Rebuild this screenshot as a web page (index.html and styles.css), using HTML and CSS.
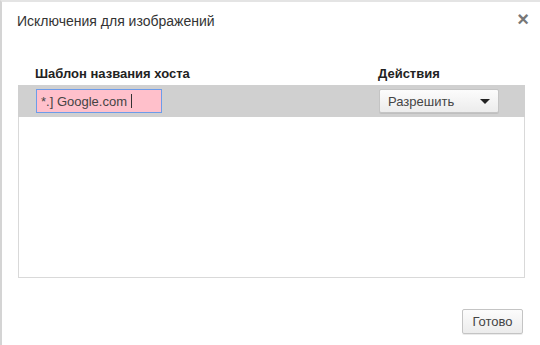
FILE: index.html
```html
<!DOCTYPE html>
<html lang="ru">
<head>
    <meta charset="UTF-8">
    <title>Исключения для изображений</title>
    <link rel="stylesheet" href="styles.css">
</head>
<body>
    <div class="dialog">
        <div class="dialog-head">
            <h1>Исключения для изображений</h1>
            <span class="close">&times;</span>
        </div>
        <div class="list">
            <div class="list-head">
                <span class="col-host">Шаблон названия хоста</span>
                <span class="col-action">Действия</span>
            </div>
            <div class="list-box">
                <div class="row selected">
                    <div class="col-host">
                        <span class="host-input">*.] Google.com <span class="caret"></span></span>
                    </div>
                    <div class="col-action">
                        <span class="select">Разрешить <span class="arrow"></span></span>
                    </div>
                </div>
            </div>
        </div>
        <div class="footer">
            <button type="button">Готово</button>
        </div>
    </div>
</body>
</html>
```

FILE: styles.css
```css
html, body {
    margin: 0;
    height: 100%;
}
body {
    font-family: "Liberation Sans", Arial, sans-serif;
    font-size: 13px;
    color: #333;
    background: #fff;
}
.dialog {
    box-sizing: border-box;
    height: 345px;
    border-top: 2px solid #e4e4e4;
    border-left: 2px solid #d4d4d4;
    display: flex;
    flex-direction: column;
}
.dialog-head {
    box-sizing: border-box;
    display: flex;
    justify-content: space-between;
    padding: 10px 11px 0 15px;
    height: 46px;
}
.dialog-head h1 {
    margin: 0;
    font-size: 14px;
    line-height: 18px;
    font-weight: normal;
    color: #333;
}
.close {
    font-size: 20px;
    font-weight: bold;
    line-height: 14px;
    color: #777;
}
.list {
    padding: 0 15px 0 16px;
}
.list-head {
    box-sizing: border-box;
    display: flex;
    font-weight: bold;
    height: 37px;
    padding-top: 17px;
    line-height: 18px;
    color: #222;
}
.list-box {
    height: 192px;
    border: 1px solid #d9d9d9;
    border-top: none;
}
.row {
    display: flex;
    align-items: center;
    height: 32px;
}
.row.selected {
    background: #d0d0d0;
    margin: 0 -1px;
}
.col-host {
    width: 343px;
    padding-left: 17px;
}
.col-action {
    flex: 1;
}
.row .col-host {
    padding-left: 18px;
    width: 342px;
}
.row .col-action {
    padding-left: 1px;
}
.host-input {
    box-sizing: border-box;
    display: inline-flex;
    align-items: center;
    width: 126px;
    height: 24px;
    padding: 0 4px;
    border: 1px solid #6c9cea;
    background: #ffc0cb;
    color: #444;
    white-space: pre;
}
.caret {
    display: inline-block;
    width: 1px;
    height: 14px;
    background: #333;
}
.select {
    box-sizing: border-box;
    display: flex;
    align-items: center;
    justify-content: space-between;
    width: 120px;
    height: 24px;
    padding: 0 8px;
    border: 1px solid #c4c4c4;
    border-radius: 2px;
    background: linear-gradient(#fcfcfc, #ececec);
    box-shadow: 0 1px 0 rgba(0, 0, 0, 0.08);
    color: #444;
}
.arrow {
    width: 0;
    height: 0;
    border-left: 5px solid transparent;
    border-right: 5px solid transparent;
    border-top: 5px solid #222;
}
.footer {
    display: flex;
    justify-content: flex-end;
    padding: 31px 17px 0 0;
}
button {
    font-family: inherit;
    font-size: 13px;
    color: #444;
    height: 25px;
    width: 61px;
    padding: 0;
    border: 1px solid #c4c4c4;
    border-radius: 2px;
    background: linear-gradient(#fcfcfc, #ececec);
    box-shadow: 0 1px 0 rgba(0, 0, 0, 0.08);
}
```
